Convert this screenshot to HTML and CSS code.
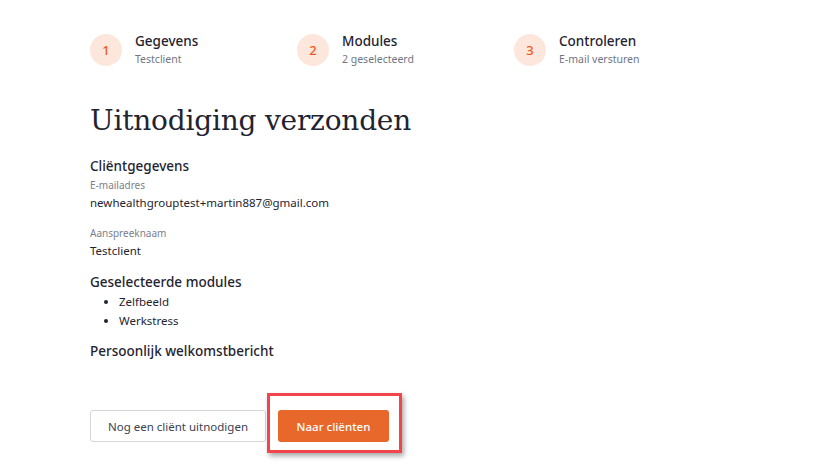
FILE: index.html
```html
<!DOCTYPE html>
<html lang="nl">
<head>
    <meta charset="UTF-8">
    <title>Uitnodiging verzonden</title>
    <link rel="stylesheet" href="styles.css">
</head>
<body>
    <div class="page">
        <div class="steps">
            <div class="step">
                <div class="step-nr">1</div>
                <div class="step-text">
                    <div class="step-title">Gegevens</div>
                    <div class="step-sub">Testclient</div>
                </div>
            </div>
            <div class="step">
                <div class="step-nr">2</div>
                <div class="step-text">
                    <div class="step-title">Modules</div>
                    <div class="step-sub">2 geselecteerd</div>
                </div>
            </div>
            <div class="step">
                <div class="step-nr">3</div>
                <div class="step-text">
                    <div class="step-title">Controleren</div>
                    <div class="step-sub">E-mail versturen</div>
                </div>
            </div>
        </div>

        <h1 class="title">Uitnodiging verzonden</h1>

        <h2 class="section">Cliëntgegevens</h2>
        <div class="label">E-mailadres</div>
        <div class="value">newhealthgrouptest+martin887@gmail.com</div>
        <div class="label label-gap">Aanspreeknaam</div>
        <div class="value">Testclient</div>

        <h2 class="section">Geselecteerde modules</h2>
        <ul class="modules">
            <li>Zelfbeeld</li>
            <li>Werkstress</li>
        </ul>

        <h2 class="section section-tight">Persoonlijk welkomstbericht</h2>

        <div class="actions">
            <button class="btn btn-secondary">Nog een cliënt uitnodigen</button>
            <div class="highlight-wrap">
                <button class="btn btn-primary">Naar cliënten</button>
                <div class="highlight"></div>
            </div>
        </div>
    </div>
</body>
</html>
```

FILE: styles.css
```css
html, body {
    height: 100%;
}

body {
    margin: 0;
    background-color: #fff;
    font-family: "Noto Sans", Roboto, sans-serif;
    color: #1f2430;
}

.page {
    padding: 33px 0 0 90px;
    min-height: 100%;
    box-sizing: border-box;
}

.steps {
    display: grid;
    grid-template-columns: 207px 217px auto;
    height: 32px;
}

.step {
    display: flex;
    align-items: center;
    gap: 13px;
}

.step-nr {
    width: 32px;
    height: 32px;
    border-radius: 50%;
    background-color: #fde6dc;
    color: #ec5a24;
    font-size: 13px;
    font-weight: 500;
    display: flex;
    justify-content: center;
    align-items: center;
}

.step-text {
    margin-top: -1px;
}

.step-title {
    font-size: 13.5px;
    font-weight: 500;
    line-height: 18px;
    color: #1f2430;
}

.step-sub {
    font-size: 10.5px;
    line-height: 16px;
    margin-top: 1px;
    color: #6f7684;
}

.title {
    font-family: "DejaVu Serif", serif;
    font-weight: normal;
    font-size: 28px;
    letter-spacing: -0.2px;
    color: #1f2430;
    margin: 36px 0 15px 0;
    line-height: 40px;
}

.section {
    font-size: 13.5px;
    font-weight: 500;
    margin: 12px 0 0 0;
    line-height: 20px;
}

.section-tight {
    margin-top: 11px;
}

.label {
    font-size: 10px;
    color: #7b818d;
    line-height: 16px;
    margin-top: 1px;
}

.label-gap {
    margin-top: 13px;
}

.value {
    font-size: 11.5px;
    line-height: 18px;
    margin-top: 1px;
}

.modules {
    margin: 0;
    padding-left: 29px;
    font-size: 11.5px;
    line-height: 19px;
}

.actions {
    display: flex;
    align-items: center;
    gap: 12px;
    margin-top: 49px;
}

.btn {
    height: 32px;
    border-radius: 3px;
    font-family: "Noto Sans", Roboto, sans-serif;
    font-size: 11.5px;
    padding: 0 10px;
    white-space: nowrap;
    cursor: pointer;
}

.btn-secondary {
    width: 176px;
    background-color: #fff;
    border: 1px solid #d3d6dc;
    color: #3b4150;
}

.btn-primary {
    width: 111px;
    background-color: #e8672a;
    border: none;
    color: #fff;
    font-weight: 500;
}

.highlight-wrap {
    position: relative;
}

.highlight {
    position: absolute;
    top: -17px;
    left: -11px;
    right: -13px;
    bottom: -11px;
    border: 3px solid #f2454b;
    box-shadow: 2px 3px 5px rgba(0, 0, 0, 0.35);
}
```
